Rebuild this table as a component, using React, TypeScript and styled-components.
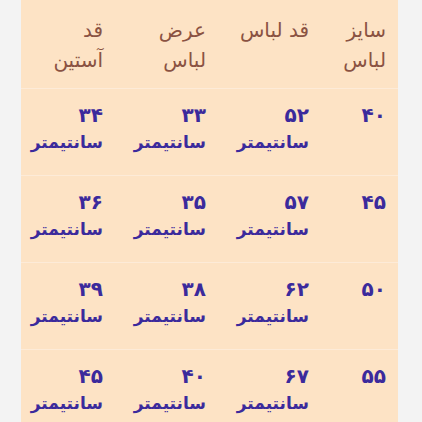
import styled, { createGlobalStyle } from "styled-components";

const GlobalStyle = createGlobalStyle`
  body {
    margin: 0;
    background: #f3f3f3;
    font-family: "DejaVu Sans", "Liberation Sans", sans-serif;
  }
`;

const Page = styled.div`
  width: 422px;
  height: 422px;
  overflow: hidden;
  background: #f3f3f3;
`;

const Panel = styled.div`
  margin-left: 21px;
  width: 377px;
  min-height: 422px;
  background: #fde3c5;
  direction: rtl;
`;

const Row = styled.div<{ $header?: boolean }>`
  display: grid;
  grid-template-columns: 77px 103px 103px 94px;
  padding: ${(p) => (p.$header ? "15px 0 13px" : "13px 0 19px")};
  border-bottom: 1px solid #fdebd8;
`;

const Cell = styled.div<{ $header?: boolean }>`
  padding-right: 12px;
  text-align: right;
  line-height: ${(p) => (p.$header ? "30px" : "27px")};
  font-size: ${(p) => (p.$header ? "20px" : "17px")};
  font-weight: ${(p) => (p.$header ? 400 : 700)};
  color: ${(p) => (p.$header ? "#8a5242" : "#3b2a9c")};
  white-space: nowrap;
`;

const Line = styled.span`
  display: block;
`;

const Num = styled(Line)`
  font-size: 20px;
`;

const headers = [["سایز", "لباس"], ["قد لباس"], ["عرض", "لباس"], ["قد", "آستین"]];

const rows = [
  ["۴۰", "۵۲", "۳۳", "۳۴"],
  ["۴۵", "۵۷", "۳۵", "۳۶"],
  ["۵۰", "۶۲", "۳۸", "۳۹"],
  ["۵۵", "۶۷", "۴۰", "۴۵"],
];

function App() {
  return (
    <Page>
      <GlobalStyle />
      <Panel>
        <Row $header>
          {headers.map((h, i) => (
            <Cell $header key={i}>
              {h.map((l) => (
                <Line key={l}>{l}</Line>
              ))}
            </Cell>
          ))}
        </Row>
        {rows.map((r, i) => (
          <Row key={i}>
            {r.map((v, j) => (
              <Cell key={j}>
                <Num>{v}</Num>
                {j > 0 && <Line>سانتیمتر</Line>}
              </Cell>
            ))}
          </Row>
        ))}
      </Panel>
    </Page>
  );
}

export default App;
